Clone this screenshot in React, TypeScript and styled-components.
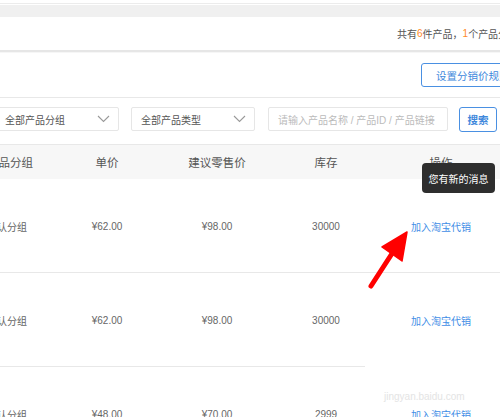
import React from "react";
import styled, { createGlobalStyle } from "styled-components";

const GlobalStyle = createGlobalStyle`
  html, body { margin: 0; padding: 0; background: #fff; overflow: hidden; }
  body { font-family: "Liberation Sans", "Noto Sans CJK SC", sans-serif; }
`;

const Page = styled.div`
  position: relative;
  width: 500px;
  height: 417px;
  overflow: hidden;
  background: #fff;
`;

const Inner = styled.div`
  margin-left: -13px;
  width: 620px;
`;

const TopStrip = styled.div`
  padding-top: 3px;
`;

const StripLine = styled.div`
  height: 1px;
  background: #ececec;
  margin-bottom: 1px;
`;

const StripBand = styled.div`
  height: 12px;
  background: #f0f0f0;
`;

const InfoBar = styled.div`
  height: 33px;
  display: flex;
  align-items: center;
  padding-left: 410px;
  font-size: 10px;
  color: #555;
  white-space: nowrap;
`;

const Hi = styled.span`
  color: #ff8a1f;
`;

const Separator = styled.div`
  height: 2px;
  background: #e6e6e6;
  border-bottom: 1px solid #f6f6f6;
`;

const ActionBar = styled.div`
  height: 44px;
  display: flex;
  align-items: center;
  padding-left: 434px;
  border-bottom: 1px solid #e8e8e8;
`;

const OutlineButton = styled.button`
  height: 24px;
  padding: 0 14px;
  border: 1px solid #4a90e2;
  border-radius: 3px;
  background: #fff;
  color: #3f88dc;
  font-family: inherit;
  font-size: 10.5px;
  white-space: nowrap;
  flex-shrink: 0;
`;

const FilterBar = styled.div`
  height: 46px;
  display: flex;
  align-items: flex-start;
  padding: 9px 0 0 8px;
  box-sizing: border-box;
`;

const Select = styled.div<{ $w: number; $gap: number }>`
  width: ${(p) => p.$w}px;
  height: 24px;
  margin-right: ${(p) => p.$gap}px;
  box-sizing: border-box;
  border: 1px solid #e6e6e6;
  border-radius: 2px;
  display: flex;
  align-items: center;
  justify-content: space-between;
  padding: 0 8px 0 9px;
  font-size: 10px;
  color: #555;
  flex-shrink: 0;
`;

const Chevron = () => (
  <svg width="13" height="8" viewBox="0 0 13 8">
    <path d="M1 1 L6.5 6.5 L12 1" fill="none" stroke="#999" strokeWidth="1.1" />
  </svg>
);

const SearchInput = styled.div`
  width: 180px;
  height: 24px;
  margin-right: 11px;
  box-sizing: border-box;
  border: 1px solid #e6e6e6;
  border-radius: 2px;
  display: flex;
  align-items: center;
  padding-left: 9px;
  font-size: 10px;
  color: #bbb;
  white-space: nowrap;
  flex-shrink: 0;
`;

const SearchButton = styled.button`
  width: 38px;
  height: 25px;
  border: 1px solid #4a90e2;
  border-radius: 3px;
  background: #fff;
  color: #3f88dc;
  font-family: inherit;
  font-size: 10.5px;
  font-weight: bold;
  padding: 0;
  flex-shrink: 0;
`;

const cols = "65px 110px 110px 108px 122px";

const HeaderRow = styled.div`
  display: grid;
  grid-template-columns: ${cols};
  height: 34px;
  align-items: center;
  background: #f7f7f7;
  border-top: 1px solid #e8e8e8;
  font-size: 11.5px;
  color: #555;
`;

const Row = styled.div<{ $lineWidth?: number }>`
  display: grid;
  grid-template-columns: ${cols};
  height: 94px;
  align-items: center;
  font-size: 10px;
  color: #666;
  background-image: linear-gradient(#e8e8e8, #e8e8e8);
  background-repeat: no-repeat;
  background-position: left bottom;
  background-size: ${(p) => (p.$lineWidth ? `${p.$lineWidth}px` : "100%")} 1px;
`;

const Cell = styled.div<{ $left?: boolean }>`
  text-align: ${(p) => (p.$left ? "left" : "center")};
  white-space: nowrap;
`;

const LinkCell = styled(Cell)`
  color: #3f8ee6;
`;

const Tooltip = styled.div`
  position: absolute;
  left: 422px;
  top: 163px;
  width: 73px;
  height: 30px;
  border-radius: 4px;
  background: #2e2e2e;
  color: #fff;
  font-size: 10px;
  display: flex;
  align-items: center;
  justify-content: center;
`;

const ArrowSvg = styled.svg`
  position: absolute;
  left: 0;
  top: 0;
  pointer-events: none;
`;

const Watermark = styled.div`
  position: absolute;
  left: 384px;
  top: 391px;
  font-size: 10px;
  color: #e4e4e4;
  white-space: nowrap;
`;

const rows = [
  { group: "默认分组", price: "¥62.00", retail: "¥98.00", stock: "30000" },
  { group: "默认分组", price: "¥62.00", retail: "¥98.00", stock: "30000", line: 378 },
  { group: "默认分组", price: "¥48.00", retail: "¥70.00", stock: "2999" },
];

export default function App() {
  return (
    <Page>
      <GlobalStyle />
      <Inner>
        <TopStrip>
          <StripLine />
          <StripBand />
        </TopStrip>
        <InfoBar>
          共有<Hi>6</Hi>件产品，<Hi>1</Hi>个产品分销中
        </InfoBar>
        <Separator />
        <ActionBar>
          <OutlineButton>设置分销价规则</OutlineButton>
        </ActionBar>
        <FilterBar>
          <Select $w={124} $gap={12}>
            全部产品分组
            <Chevron />
          </Select>
          <Select $w={124} $gap={13}>
            全部产品类型
            <Chevron />
          </Select>
          <SearchInput>请输入产品名称 / 产品ID / 产品链接</SearchInput>
          <SearchButton>搜索</SearchButton>
        </FilterBar>
        <HeaderRow>
          <Cell $left>产品分组</Cell>
          <Cell>单价</Cell>
          <Cell>建议零售价</Cell>
          <Cell>库存</Cell>
          <Cell>操作</Cell>
        </HeaderRow>
        {rows.map((r, i) => (
          <Row key={i} $lineWidth={r.line}>
            <Cell $left>{r.group}</Cell>
            <Cell>{r.price}</Cell>
            <Cell>{r.retail}</Cell>
            <Cell>{r.stock}</Cell>
            <LinkCell>加入淘宝代销</LinkCell>
          </Row>
        ))}
      </Inner>
      <Tooltip>您有新的消息</Tooltip>
      <Watermark>jingyan.baidu.com</Watermark>
      <ArrowSvg width="500" height="417" viewBox="0 0 500 417">
        <line x1="371" y1="286" x2="393" y2="252" stroke="#f00" strokeWidth="5" strokeLinecap="round" />
        <polygon points="407,232 382,247 402,261" fill="#f00" stroke="#f00" strokeWidth="1.5" strokeLinejoin="round" />
      </ArrowSvg>
    </Page>
  );
}
